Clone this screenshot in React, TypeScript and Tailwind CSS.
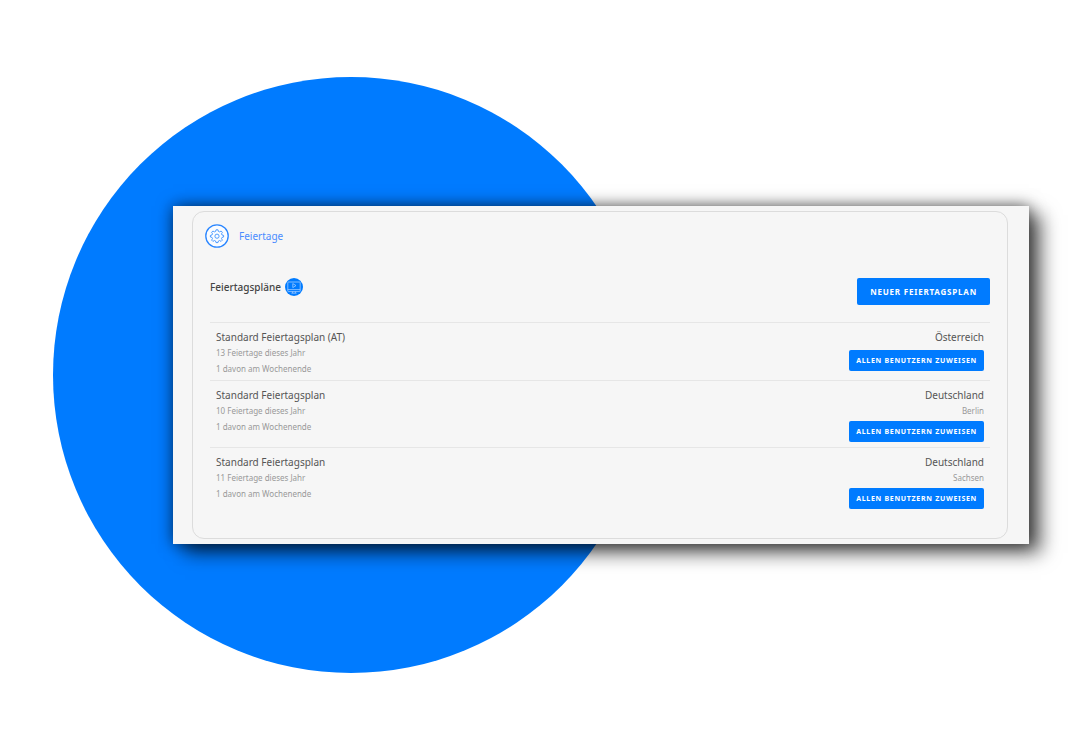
type Plan = {
  id: number
  name: string
  holidays: number
  weekend: number
  country: string
  region?: string
}

const plans: Plan[] = [
  { id: 1, name: "Standard Feiertagsplan (AT)", holidays: 13, weekend: 1, country: "Österreich" },
  { id: 2, name: "Standard Feiertagsplan", holidays: 10, weekend: 1, country: "Deutschland", region: "Berlin" },
  { id: 3, name: "Standard Feiertagsplan", holidays: 11, weekend: 1, country: "Deutschland", region: "Sachsen" },
]

function GearIcon() {
  return (
    <svg viewBox="0 0 24 24" className="size-6 shrink-0" fill="none" stroke="#2a86ff" aria-hidden="true">
      <circle cx="12" cy="12" r="11.2" strokeWidth="1.3" fill="#fafcff" />
      <path
        d="M11 5.8h2l.4 1.6 1.2.5 1.5-.9 1.3 1.3-.9 1.5.5 1.2 1.6.4v1.6l-1.6.4-.5 1.2.9 1.5-1.3 1.3-1.5-.9-1.2.5-.4 1.6h-2l-.4-1.6-1.2-.5-1.5.9-1.3-1.3.9-1.5-.5-1.2-1.6-.4v-1.6l1.6-.4.5-1.2-.9-1.5 1.3-1.3 1.5.9 1.2-.5z"
        strokeWidth="0.8"
        strokeLinejoin="round"
      />
      <circle cx="12" cy="12.2" r="2.1" strokeWidth="0.8" />
    </svg>
  )
}

function VideoIcon() {
  return (
    <svg viewBox="0 0 18 18" className="size-[18px]" fill="none" stroke="#b5d7ff" strokeWidth="0.7" aria-hidden="true">
      <circle cx="9" cy="9" r="9" fill="#007bff" stroke="none" />
      <rect x="2.8" y="4" width="12.4" height="9.6" rx="0.6" />
      <path d="M2.8 11.6h12.4M7.8 5.6v4l3.2-2zM7.6 13.6v1.4M10.4 13.6v1.4M6.4 15.2h5.2" />
    </svg>
  )
}

function PlanRow({ plan }: { plan: Plan }) {
  return (
    <li
      className={`flex justify-between border-t border-[#e6e6e6] px-1.5 pt-1.5 ${
        plan.region ? "pb-[5px]" : "pb-[3px]"
      }`}
    >
      <div className="text-[8px] leading-4 text-[#999]">
        <h3 className="text-[10px] leading-4 text-[#555]">{plan.name}</h3>
        <p>{plan.holidays} Feiertage dieses Jahr</p>
        <p>{plan.weekend} davon am Wochenende</p>
      </div>
      <div className="flex flex-col items-end text-[8px] leading-4 text-[#999]">
        <p className="text-[10px] leading-4 text-[#555]">{plan.country}</p>
        {plan.region && <p>{plan.region}</p>}
        <button
          type="button"
          className={`h-[21px] rounded-xs bg-[#007bff] px-[7px] text-[7px] font-bold tracking-widest text-white ${
            plan.region ? "mt-0.5" : "mt-[5px]"
          }`}
        >
          ALLEN BENUTZERN ZUWEISEN
        </button>
      </div>
    </li>
  )
}

export default function App() {
  return (
    <main className="relative flex min-h-screen items-center overflow-hidden bg-white pr-[63px] pl-[173px] font-['Noto_Sans',sans-serif]">
      <div className="absolute top-1/2 left-[53px] size-[596px] -translate-y-1/2 rounded-full bg-[#007bff]" />
      <div className="relative w-full bg-[#f6f6f6] pt-[5px] pr-[21px] pb-[5px] pl-[19px] shadow-[12px_9px_18px_rgba(0,0,0,0.6),0_0_15px_rgba(0,0,0,0.6)]">
        <section className="rounded-xl border border-[#dcdcdc] px-[17px] pt-3 pb-6">
          <header className="-ml-[5px] flex items-center gap-2.5">
            <GearIcon />
            <h1 className="text-[10px] leading-4 text-[#4a8cff]">Feiertage</h1>
          </header>

          <div className="mt-[30px] mb-[17px] flex items-start justify-between">
            <div className="flex items-center gap-1">
              <h2 className="text-[10px] leading-4 font-medium text-[#444]">Feiertagspläne</h2>
              <button type="button" aria-label="Video">
                <VideoIcon />
              </button>
            </div>
            <button
              type="button"
              className="h-[27px] rounded-xs bg-[#007bff] px-[13px] text-[8px] font-bold tracking-widest text-white"
            >
              NEUER FEIERTAGSPLAN
            </button>
          </div>

          <ul>
            {plans.map((plan) => (
              <PlanRow key={plan.id} plan={plan} />
            ))}
          </ul>
        </section>
      </div>
    </main>
  )
}
